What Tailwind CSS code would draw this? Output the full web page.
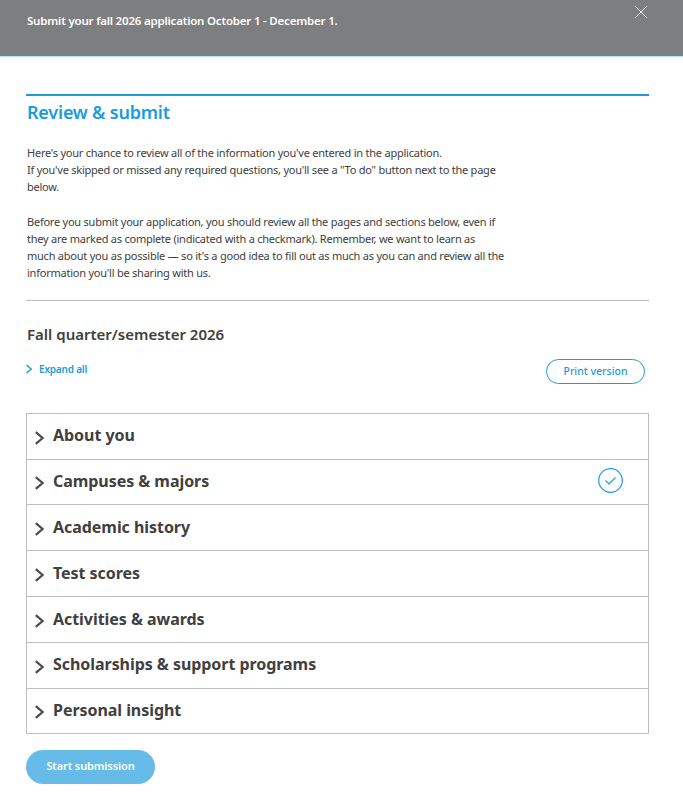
<!DOCTYPE html>
<html lang="en">
<head>
  <meta charset="UTF-8" />
  <title>Review &amp; submit</title>
  <script src="https://cdn.jsdelivr.net/npm/@tailwindcss/browser@4"></script>
</head>
<body class="bg-white font-['Noto_Sans',sans-serif] text-[#404040] h-[795px] overflow-hidden">

  <!-- banner -->
  <div class="h-[57px] bg-[#7d7e80] border-b border-[#b5e6f2] pl-[27px] pr-[35px] flex justify-between items-start">
    <p class="mt-[12px] text-[11.5px] leading-[17px] font-semibold text-white tracking-[-0.2px]">Submit your fall 2026 application October 1 - December 1.</p>
    <svg class="mt-[5px]" width="14" height="14" viewBox="0 0 14 14" fill="none" stroke="#e8e8e8" stroke-width="1"><path d="M1 1 L13 13 M13 1 L1 13"/></svg>
  </div>

  <main class="pl-[26px] pr-[34px] pt-[37px]">
    <div class="border-t-2 border-[#1a9bdc]">
      <h1 class="mt-[4px] pl-[1px] text-[18px] leading-[24px] font-semibold text-[#1a9bdc] tracking-[-0.2px]">Review &amp; submit</h1>
    </div>

    <div class="mt-[20px] pl-[1px] pb-[18.6px] border-b border-[#bdbdbd] text-[11px] leading-[17.2px] tracking-[-0.23px]">
      <p>Here's your chance to review all of the information you've entered in the application.<br>If you've skipped or missed any required questions, you'll see a "To do" button next to the page<br>below.</p>
      <p class="mt-[17px]">Before you submit your application, you should review all the pages and sections below, even if<br>they are marked as complete (indicated with a checkmark). Remember, we want to learn as<br>much about you as possible — so it's a good idea to fill out as much as you can and review all the<br>information you'll be sharing with us.</p>
    </div>

    <h2 class="mt-[23px] pl-[1px] text-[15px] leading-[20px] font-semibold">Fall quarter/semester 2026</h2>

    <div class="mt-[15px] flex justify-between items-start">
      <div class="flex items-center gap-[7px] mt-[3px]">
        <svg width="6" height="10" viewBox="0 0 6 10" fill="none" stroke="#1a9bdc" stroke-width="1.5"><path d="M0.5 1 L5.2 5 L0.5 9"/></svg>
        <span class="text-[10px] leading-[14px] font-semibold text-[#1a9bdc] tracking-[-0.2px]">Expand all</span>
      </div>
      <button class="mr-[4px] w-[99px] h-[25px] rounded-full border border-[#1a9bdc] text-[10.5px] font-medium text-[#1a9bdc] bg-white">Print version</button>
    </div>

    <!-- sections -->
    <div class="mt-[29px] border border-[#bdbdbd] divide-y divide-[#bdbdbd]">
      <div class="h-[46px] flex items-center pl-[8px]">
        <svg class="mt-[2px]" width="9" height="14" viewBox="0 0 9 14" fill="none" stroke="#4a4a4a" stroke-width="2.2"><path d="M0.8 1.2 L7.6 7 L0.8 12.8"/></svg>
        <span class="ml-[9px] mb-[3px] text-[16px] font-bold tracking-[-0.05px]">About you</span>
      </div>
      <div class="h-[45px] flex items-center pl-[8px] relative">
        <svg class="mt-[2px]" width="9" height="14" viewBox="0 0 9 14" fill="none" stroke="#4a4a4a" stroke-width="2.2"><path d="M0.8 1.2 L7.6 7 L0.8 12.8"/></svg>
        <span class="ml-[9px] mb-[3px] text-[16px] font-bold tracking-[-0.05px]">Campuses &amp; majors</span>
        <svg class="absolute right-[25px] top-[8px]" width="25" height="25" viewBox="0 0 25 25" fill="none" stroke="#1a9bdc"><circle cx="12.5" cy="12.5" r="11.8" stroke-width="1.2"/><path d="M7.5 12.5 L11 16 L17.5 9.5" stroke-width="1.2"/></svg>
      </div>
      <div class="h-[46px] flex items-center pl-[8px]">
        <svg class="mt-[2px]" width="9" height="14" viewBox="0 0 9 14" fill="none" stroke="#4a4a4a" stroke-width="2.2"><path d="M0.8 1.2 L7.6 7 L0.8 12.8"/></svg>
        <span class="ml-[9px] mb-[2px] text-[16px] font-bold tracking-[-0.05px]">Academic history</span>
      </div>
      <div class="h-[46px] flex items-center pl-[8px]">
        <svg class="mt-[2px]" width="9" height="14" viewBox="0 0 9 14" fill="none" stroke="#4a4a4a" stroke-width="2.2"><path d="M0.8 1.2 L7.6 7 L0.8 12.8"/></svg>
        <span class="ml-[9px] mb-[2px] text-[16px] font-bold tracking-[-0.05px]">Test scores</span>
      </div>
      <div class="h-[46px] flex items-center pl-[8px]">
        <svg class="mt-[2px]" width="9" height="14" viewBox="0 0 9 14" fill="none" stroke="#4a4a4a" stroke-width="2.2"><path d="M0.8 1.2 L7.6 7 L0.8 12.8"/></svg>
        <span class="ml-[9px] mb-[2px] text-[16px] font-bold tracking-[-0.05px]">Activities &amp; awards</span>
      </div>
      <div class="h-[46px] flex items-center pl-[8px]">
        <svg class="mt-[2px]" width="9" height="14" viewBox="0 0 9 14" fill="none" stroke="#4a4a4a" stroke-width="2.2"><path d="M0.8 1.2 L7.6 7 L0.8 12.8"/></svg>
        <span class="ml-[9px] mb-[3px] text-[16px] font-bold tracking-[-0.05px]">Scholarships &amp; support programs</span>
      </div>
      <div class="h-[44px] flex items-center pl-[8px]">
        <svg class="mt-[2px]" width="9" height="14" viewBox="0 0 9 14" fill="none" stroke="#4a4a4a" stroke-width="2.2"><path d="M0.8 1.2 L7.6 7 L0.8 12.8"/></svg>
        <span class="ml-[9px] mb-[2px] text-[16px] font-bold tracking-[-0.05px]">Personal insight</span>
      </div>
    </div>

    <button class="mt-[16px] w-[129px] h-[34px] rounded-full bg-[#66bbe8] text-white text-[11px] font-semibold pb-[2px] tracking-[-0.1px]">Start submission</button>
  </main>

</body>
</html>
